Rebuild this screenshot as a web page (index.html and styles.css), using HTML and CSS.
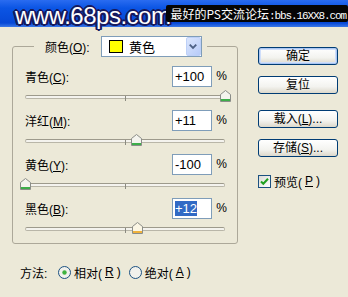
FILE: index.html
```html
<!DOCTYPE html>
<html lang="zh-CN">
<head>
    <meta charset="UTF-8">
    <title>可选颜色</title>
    <link rel="stylesheet" href="styles.css">
</head>
<body>
    <div class="titlebar">
        <span class="watermark">www.68ps.com</span>
        <span class="banner">最好的PS交流论坛<span class="mono">:bbs.16XX8.com</span></span>
    </div>

    <div class="dialog">
        <fieldset class="group">
            <legend class="group-title">
                <span class="legend-label">颜色(<u>O</u>):</span>
                <span class="select">
                    <span class="swatch"></span>
                    <span class="select-text">黄色</span>
                    <span class="select-arrow">
                        <svg width="15" height="19" viewBox="0 0 15 19"><path d="M4 7.5 L7.5 11 L11 7.5" fill="none" stroke="#4d6185" stroke-width="2"/></svg>
                    </span>
                </span>
            </legend>

            <div class="channel">
                <div class="channel-row">
                    <span class="channel-label">青色(<u>C</u>):</span>
                    <span class="num">+100</span>
                    <span class="pct">%</span>
                </div>
                <div class="slider">
                    <div class="track"></div>
                    <span class="thumb" style="left: 195px">
                        <svg width="11" height="12" viewBox="0 0 11 12"><path d="M0.5 4.5 L5.5 0.5 L10.5 4.5 V11.5 H0.5 Z" fill="#f4f4ee" stroke="#8a8d88"/><rect x="1" y="9" width="9" height="2" fill="#3dae4a"/></svg>
                    </span>
                </div>
            </div>

            <div class="channel">
                <div class="channel-row">
                    <span class="channel-label">洋红(<u>M</u>):</span>
                    <span class="num">+11</span>
                    <span class="pct">%</span>
                </div>
                <div class="slider">
                    <div class="track"></div>
                    <span class="thumb" style="left: 106px">
                        <svg width="11" height="12" viewBox="0 0 11 12"><path d="M0.5 4.5 L5.5 0.5 L10.5 4.5 V11.5 H0.5 Z" fill="#f4f4ee" stroke="#8a8d88"/><rect x="1" y="9" width="9" height="2" fill="#3dae4a"/></svg>
                    </span>
                </div>
            </div>

            <div class="channel">
                <div class="channel-row">
                    <span class="channel-label">黄色(<u>Y</u>):</span>
                    <span class="num">-100</span>
                    <span class="pct">%</span>
                </div>
                <div class="slider">
                    <div class="track"></div>
                    <span class="thumb" style="left: -5px">
                        <svg width="11" height="12" viewBox="0 0 11 12"><path d="M0.5 4.5 L5.5 0.5 L10.5 4.5 V11.5 H0.5 Z" fill="#f4f4ee" stroke="#8a8d88"/><rect x="1" y="9" width="9" height="2" fill="#3dae4a"/></svg>
                    </span>
                </div>
            </div>

            <div class="channel">
                <div class="channel-row">
                    <span class="channel-label">黑色(<u>B</u>):</span>
                    <span class="num"><span class="selected">+12</span></span>
                    <span class="pct">%</span>
                </div>
                <div class="slider">
                    <div class="track"></div>
                    <span class="thumb" style="left: 107px">
                        <svg width="11" height="12" viewBox="0 0 11 12"><path d="M0.5 4.5 L5.5 0.5 L10.5 4.5 V11.5 H0.5 Z" fill="#fbf6e4" stroke="#8a8d88"/><rect x="1" y="9" width="9" height="2" fill="#f0b23c"/></svg>
                    </span>
                </div>
            </div>
        </fieldset>

        <div class="buttons">
            <button class="btn btn-default">确定</button>
            <button class="btn">复位</button>
            <button class="btn btn-gap">载入(<u>L</u>)...</button>
            <button class="btn">存储(<u>S</u>)...</button>
            <label class="check">
                <span class="checkbox">
                    <svg width="13" height="13" viewBox="0 0 13 13"><path d="M3 6.5 L5.3 8.8 L10 3.8" fill="none" stroke="#21a121" stroke-width="2"/></svg>
                </span>
                预览(<u>P</u>)
            </label>
        </div>
    </div>

    <div class="method">
        <span class="method-label">方法:</span>
        <label class="radio-item">
            <svg width="13" height="13" viewBox="0 0 13 13"><circle cx="6.5" cy="6.5" r="6" fill="#f1f1ec" stroke="#1c5180"/><circle cx="6.5" cy="6.5" r="2.2" fill="#3fb23f"/></svg>
            相对(<u>R</u>)
        </label>
        <label class="radio-item">
            <svg width="13" height="13" viewBox="0 0 13 13"><circle cx="6.5" cy="6.5" r="6" fill="#f1f1ec" stroke="#1c5180"/></svg>
            绝对(<u>A</u>)
        </label>
    </div>
</body>
</html>
```

FILE: styles.css
```css
* {
    margin: 0;
    padding: 0;
    box-sizing: border-box;
}
body {
    width: 348px;
    height: 297px;
    overflow: hidden;
    background-color: #ece9d8;
    font-family: 'Liberation Sans', 'Noto Sans CJK SC', sans-serif;
    font-size: 12px;
    color: #000;
}
u {
    text-decoration: underline;
    text-underline-offset: 1px;
}
.titlebar {
    height: 27px;
    display: flex;
    align-items: center;
    padding-left: 15px;
    background: linear-gradient(#2a6cf0, #0b55e4 30%, #0648d6 85%, #3b78e8);
}
.watermark {
    font-family: 'Liberation Sans', sans-serif;
    font-size: 24px;
    letter-spacing: -0.5px;
    color: #fff;
    line-height: 27px;
    margin-top: 3px;
    text-shadow: -2px 0 #161a5e, 2px 0 #161a5e, 0 -2px #161a5e, 0 2px #161a5e,
                 -1px -1px #161a5e, 1px 1px #161a5e, -1px 1px #161a5e, 1px -1px #161a5e,
                 -2px 1px #161a5e, 2px 1px #161a5e;
}
.banner {
    margin-left: -4px;
    height: 17px;
    width: 182px;
    background-color: #050505;
    color: #fff;
    font-family: 'Noto Sans CJK SC', sans-serif;
    font-size: 12px;
    line-height: 17px;
    padding-left: 4px;
    white-space: nowrap;
    border-radius: 2px;
}
.mono {
    font-family: 'Liberation Mono', monospace;
    font-size: 11px;
    letter-spacing: -1.1px;
}
.dialog {
    display: flex;
    padding: 9px 0 0 12px;
}
.group {
    width: 226px;
    border: 1px solid #aca899;
    border-radius: 3px;
    padding: 0 10px 4px 12px;
}
.group-title {
    margin-left: 9px;
    padding: 0 5px 0 11px;
    display: flex;
    align-items: center;
    height: 21px;
}
.legend-label {
    width: 56px;
}
.select {
    width: 101px;
    height: 21px;
    display: flex;
    align-items: center;
    background-color: #fff;
    border: 1px solid #7f9db9;
    padding: 0 0 0 7px;
}
.swatch {
    width: 14px;
    height: 13px;
    background-color: #ffff00;
    border: 1px solid #000;
}
.select-text {
    margin-left: 6px;
    flex: 1;
    font-size: 13px;
}
.select-arrow {
    width: 15px;
    height: 19px;
    display: flex;
    border-radius: 2px;
    background: linear-gradient(135deg, #dbe6fd, #b7cbf8);
    border: 1px solid #bdd0f7;
}
.select-arrow svg {
    margin-left: -1px;
    margin-top: -1px;
}
.channel {
    height: 44px;
}
.channel:first-of-type {
    margin-top: 9px;
}
.channel:last-child {
    height: 41px;
}
.channel-row {
    display: flex;
    align-items: center;
    height: 20px;
}
.channel-label {
    flex: 1;
}
.num {
    width: 40px;
    height: 21px;
    background-color: #fff;
    border: 1px solid #7f9db9;
    font-size: 13px;
    line-height: 19px;
    padding-left: 2px;
}
.selected {
    background-color: #316ac5;
    color: #fff;
}
.pct {
    width: 15px;
    text-align: right;
    font-size: 12px;
}
.slider {
    position: relative;
    height: 24px;
    width: 200px;
    padding-top: 9px;
}
.track {
    height: 4px;
    border: 1px solid #b9b6a8;
    border-top-color: #9d9a8c;
    border-radius: 2px;
    background-color: #f4f3ee;
}
.slider::after {
    content: '';
    position: absolute;
    left: 100px;
    top: 10px;
    width: 1px;
    height: 5px;
    background-color: #8a8a80;
}
.thumb {
    position: absolute;
    top: 4px;
    z-index: 1;
    line-height: 0;
}
.buttons {
    margin-left: 20px;
    padding-top: 11px;
    display: flex;
    flex-direction: column;
    gap: 11px;
}
.btn {
    width: 80px;
    height: 18px;
    font-family: 'Liberation Sans', 'Noto Sans CJK SC', sans-serif;
    font-size: 12px;
    line-height: 15px;
    color: #000;
    border: 1px solid #003c74;
    border-radius: 3px;
    background: linear-gradient(#ffffff, #f3f3ef 60%, #dcd8cb);
}
.btn-default {
    box-shadow: inset 0 0 0 1px #aac6f2, inset 0 0 0 2px #cfdefa;
}
.btn-gap {
    margin-top: 5px;
}
.check {
    display: flex;
    align-items: center;
    gap: 3px;
    margin-top: 6px;
    height: 14px;
}
.checkbox {
    width: 13px;
    height: 13px;
    border: 1px solid #1c5180;
    background: linear-gradient(135deg, #dcdcd6, #fff);
    display: flex;
    line-height: 0;
}
.checkbox svg {
    margin: -1px;
}
.method {
    display: flex;
    align-items: center;
    padding-left: 20px;
    margin-top: 20px;
    height: 16px;
}
.method-label {
    width: 38px;
}
.radio-item {
    display: flex;
    align-items: center;
    gap: 3px;
    margin-right: 8px;
}
```
